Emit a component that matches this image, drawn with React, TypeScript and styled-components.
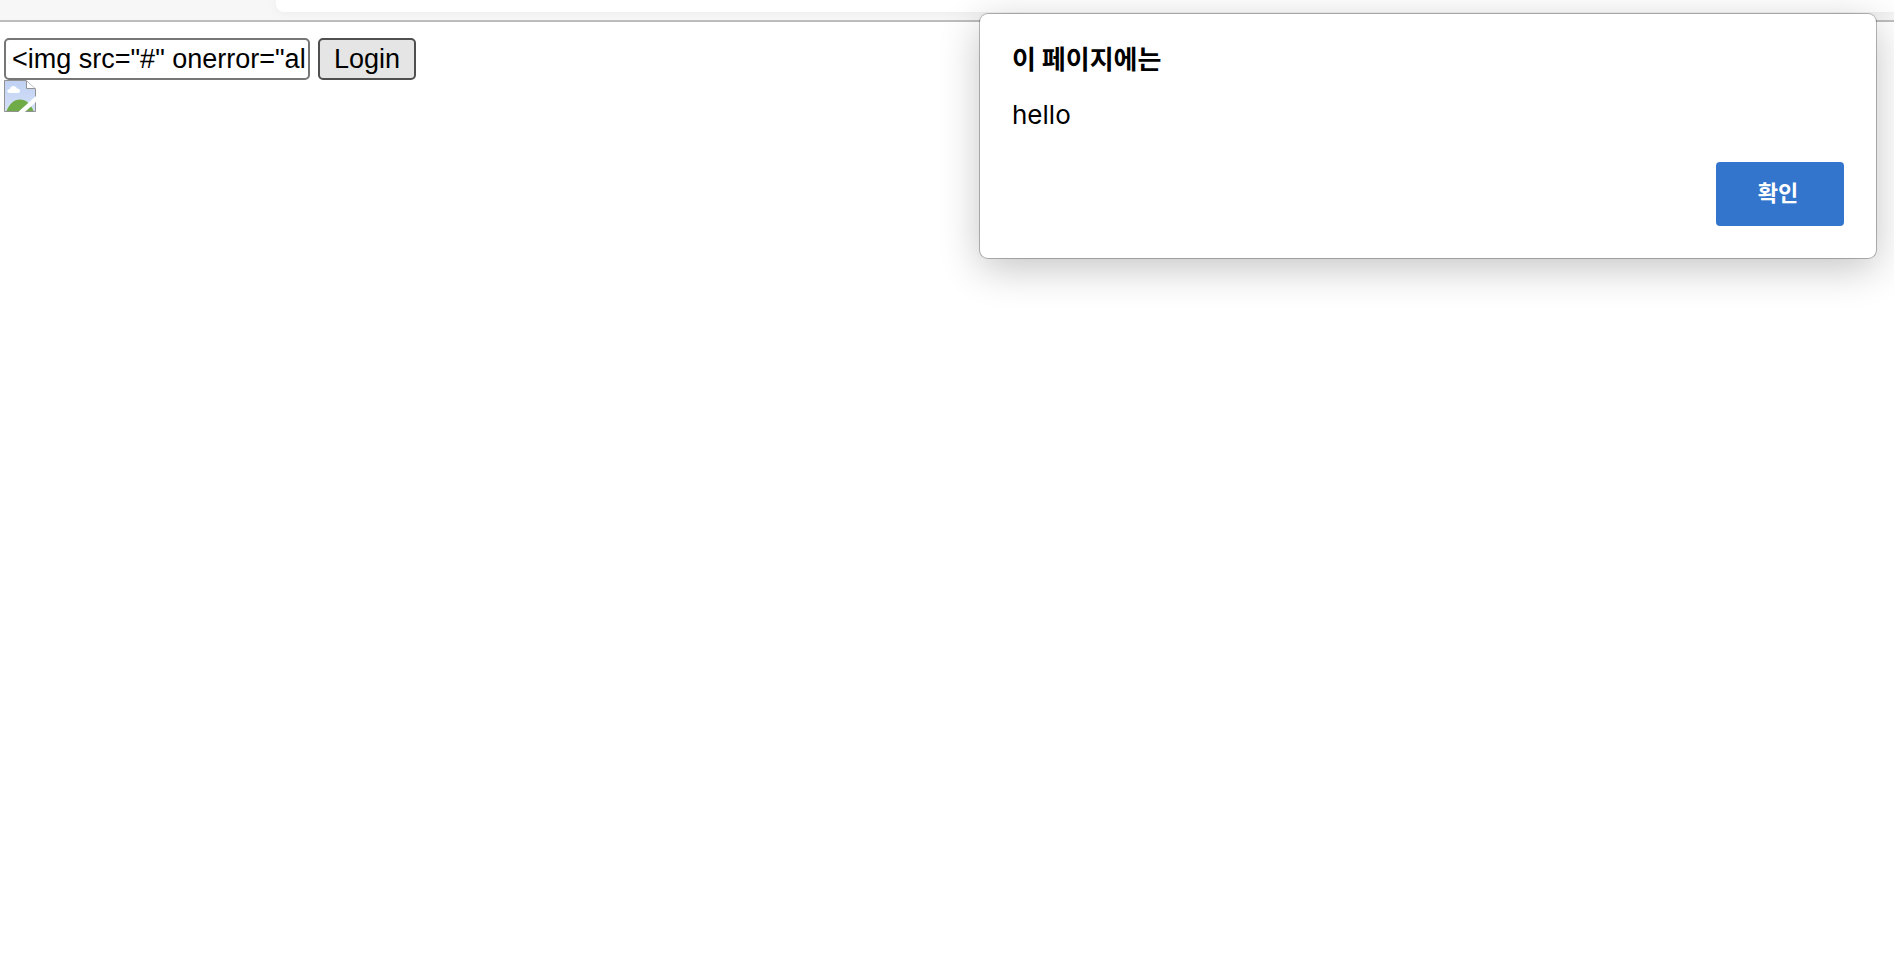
import React, { useState } from "react";
import styled, { createGlobalStyle } from "styled-components";

const GlobalStyle = createGlobalStyle`
  *, *::before, *::after { box-sizing: border-box; }
  body {
    margin: 0;
    background: #fff;
    color: #000;
    font-family: "Liberation Sans", Arial, sans-serif;
    overflow-x: hidden;
  }
`;

const Page = styled.div`
  position: relative;
  min-height: 100vh;
  overflow: hidden;
`;

const BrowserBar = styled.header`
  height: 22px;
  padding-left: 276px;
  background: #f7f7f7;
  border-bottom: 2px solid #bdbdbd;
`;

const AddressField = styled.div`
  height: 12px;
  background: #fff;
  border-bottom-left-radius: 8px;
  box-shadow: 0 0 12px rgba(0, 0, 0, 0.06);
  clip-path: inset(0 0 -8px -12px);
`;

const Content = styled.main`
  padding: 16px 4px;
`;

const LoginForm = styled.form`
  display: flex;
  gap: 8px;
`;

const TextInput = styled.input`
  width: 306px;
  height: 42px;
  padding: 0 2px 0 6px;
  border: 2px solid #767676;
  border-radius: 5px;
  background: #fff;
  color: #000;
  font: 27px "Liberation Sans", Arial, sans-serif;
  outline: none;
`;

const LoginButton = styled.button`
  width: 98px;
  height: 42px;
  padding: 0;
  border: 2px solid #4f4f4f;
  border-radius: 5px;
  background: #e5e5e5;
  color: #000;
  font: 27px "Liberation Sans", Arial, sans-serif;
`;

const BrokenIcon = styled.svg`
  display: block;
  width: 32px;
  height: 32px;
`;

const Dialog = styled.section`
  position: absolute;
  top: 14px;
  right: 18px;
  width: 896px;
  max-width: calc(100% - 36px);
  padding: 26px 32px 32px;
  border-radius: 8px;
  background: #fff;
  box-shadow: 0 0 0 1px rgba(0, 0, 0, 0.26), 0 10px 40px rgba(0, 0, 0, 0.24);
  font-family: Inter, "Noto Sans CJK KR", sans-serif;
`;

const DialogTitle = styled.h1`
  margin: 0;
  font: 700 26px/36px "Noto Sans CJK KR", sans-serif;
`;

const DialogMessage = styled.p`
  margin: 21px 0 29px;
  font-size: 26px;
  line-height: 36px;
`;

const DialogActions = styled.div`
  display: flex;
  justify-content: flex-end;
`;

const ConfirmButton = styled.button`
  width: 128px;
  height: 64px;
  padding: 0 4px 6px 0;
  border: 0;
  border-radius: 4px;
  background: #3375cd;
  color: #fff;
  font: 700 22px "Noto Sans CJK KR", sans-serif;
`;

function BrokenImage() {
  return (
    <BrokenIcon viewBox="0 0 32 32" role="img" aria-label="Broken image">
      <defs>
        <linearGradient id="sky" x1="0" y1="0" x2="0" y2="1">
          <stop offset="0" stopColor="#bfd0f2" />
          <stop offset="1" stopColor="#d5e1f8" />
        </linearGradient>
        <clipPath id="sheet">
          <path d="M0 0H22L32 9V16L14 32H0Z M32 22V32H21Z" />
        </clipPath>
      </defs>
      <g clipPath="url(#sheet)">
        <rect width="32" height="32" fill="url(#sky)" />
        <path d="M2 32C5 24 10 19.500 16 19.500C22 19.500 27 24 30 32Z" fill="#6fac47" />
        <path d="M5.500 13C2.500 13 2.500 9 6 9C6.500 5 12 5 13 8.500C17 8.500 17 13 14 13Z" fill="#fff" />
        <path d="M22.500 0.500L31.500 8.500H22.500Z" fill="#fff" stroke="#929292" />
        <path d="M22 0.500H0.500V31.500H31.500V8.500" fill="none" stroke="#929292" />
      </g>
    </BrokenIcon>
  );
}

export default function App() {
  const [value, setValue] = useState('<img src="#" onerror="alert(\'hello\')">');
  return (
    <>
      <GlobalStyle />
      <Page>
        <BrowserBar>
          <AddressField />
        </BrowserBar>
        <Content>
          <LoginForm onSubmit={(event) => event.preventDefault()}>
            <TextInput
              type="text"
              aria-label="Username"
              value={value}
              onChange={(event) => setValue(event.target.value)}
            />
            <LoginButton type="submit">Login</LoginButton>
          </LoginForm>
          <BrokenImage />
        </Content>
        <Dialog role="alertdialog" aria-labelledby="dialog-title" aria-describedby="dialog-message">
          <DialogTitle id="dialog-title">이 페이지에는</DialogTitle>
          <DialogMessage id="dialog-message">hello</DialogMessage>
          <DialogActions>
            <ConfirmButton type="button">확인</ConfirmButton>
          </DialogActions>
        </Dialog>
      </Page>
    </>
  );
}
